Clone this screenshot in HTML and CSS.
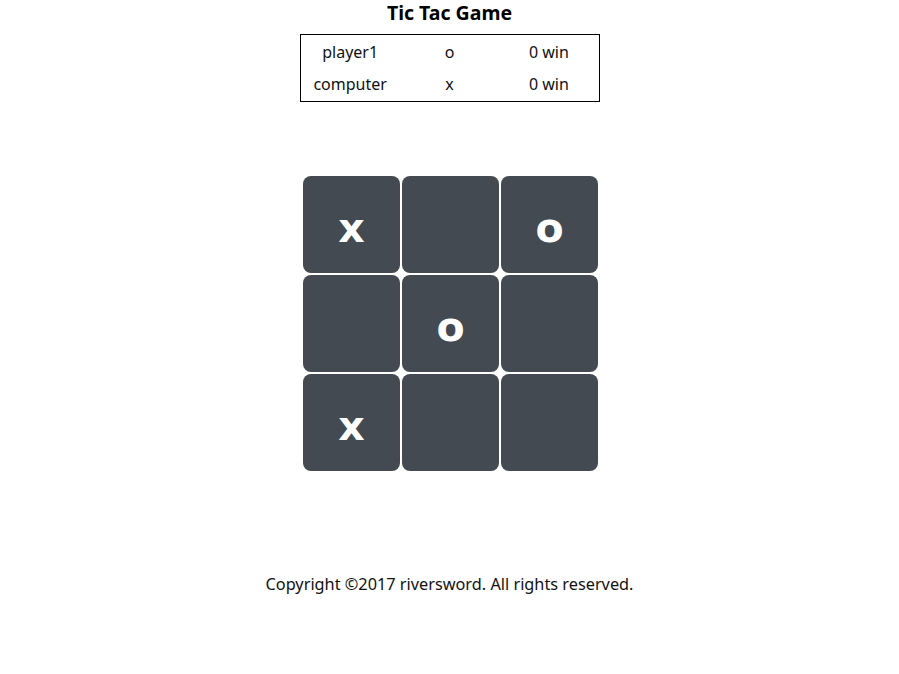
FILE: index.html
```html
<!DOCTYPE html>
<html lang="en">
<head>
<meta charset="utf-8">
<title>Tic Tac Game</title>
<link rel="stylesheet" href="styles.css">
</head>
<body>
<h1 class="title">Tic Tac Game</h1>
<div class="score">
  <div class="row"><span>player1</span><span>o</span><span>0 win</span></div>
  <div class="row"><span>computer</span><span>x</span><span>0 win</span></div>
</div>
<div class="board">
  <div class="cell">x</div>
  <div class="cell"></div>
  <div class="cell">o</div>
  <div class="cell"></div>
  <div class="cell">o</div>
  <div class="cell"></div>
  <div class="cell">x</div>
  <div class="cell"></div>
  <div class="cell"></div>
</div>
<p class="footer">Copyright ©2017 riversword. All rights reserved.</p>
</body>
</html>
```
FILE: styles.css
```css
html, body {
  margin: 0;
  padding: 0;
  background: #ffffff;
}
body {
  font-family: "Noto Sans", "Open Sans", sans-serif;
  color: #111;
}
.title {
  margin: 0;
  font-size: 19.5px;
  line-height: 26px;
  font-weight: bold;
  text-align: center;
  color: #000;
}
.score {
  width: 298px;
  margin: 8px auto 0;
  border: 1px solid #000;
  padding: 1px 0;
}
.row {
  display: grid;
  grid-template-columns: 1fr 1fr 1fr;
  height: 32px;
  align-items: center;
  text-align: center;
  font-size: 16px;
}
.board {
  width: 295px;
  margin: 74px auto 0;
  padding-left: 2px;
  display: grid;
  grid-template-columns: repeat(3, 97px);
  grid-auto-rows: 97px;
  gap: 2px;
}
.cell {
  background: #434a52;
  border-radius: 8px;
  color: #fff;
  font-family: "DejaVu Sans", sans-serif;
  font-weight: bold;
  font-size: 41px;
  display: flex;
  align-items: center;
  justify-content: center;
  padding-top: 6px;
  box-sizing: border-box;
}
.footer {
  margin: 101px 0 0;
  text-align: center;
  font-size: 16.3px;
  line-height: 24px;
  color: #111;
}
```
